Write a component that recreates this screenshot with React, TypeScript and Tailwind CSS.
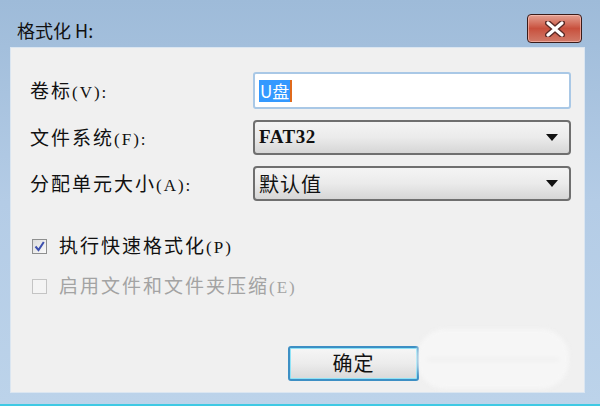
const Label: React.FC<{ zh: string; en: string; muted?: boolean }> = ({ zh, en, muted }) => (
  <span className={`flex items-baseline whitespace-nowrap ${muted ? "text-[#a3a3a3]" : "text-[#111]"}`}>
    <span className="font-['Noto_Sans_CJK_SC',sans-serif] text-[19px] tracking-[2px]">{zh}</span>
    <span className="font-['Liberation_Serif',serif] text-[17px] tracking-[2px]">{en}</span>
  </span>
);

const Arrow = () => (
  <svg width="12" height="7" viewBox="0 0 12 7" className="mr-[11px] shrink-0">
    <path d="M0 0h12L6 7z" fill="#111" />
  </svg>
);

const Select: React.FC<{ children: React.ReactNode }> = ({ children }) => (
  <div className="flex h-[35px] w-[318px] items-center justify-between rounded-[4px] border-2 border-[#6f6f6f] bg-gradient-to-b from-[#f4f4f4] via-[#ebebeb] to-[#d6d6d6] pl-[4px]">
    {children}
    <Arrow />
  </div>
);

const App: React.FC = () => {
  return (
    <div className="flex h-[406px] w-[600px] flex-col overflow-hidden border-b-2 border-[#3fc9e4] bg-gradient-to-b from-[#9ebbd9] via-[#b4cce6] to-[#bcd3ea]">
      {/* title bar */}
      <div className="flex h-[47px] shrink-0 items-start justify-between pl-[17px] pr-[18px]">
        <span className="mt-[19px] font-['Noto_Sans_CJK_SC',sans-serif] text-[18px] leading-[22px] text-[#111]">
          格式化 H:
        </span>
        <button className="mt-[14px] flex h-[29px] w-[55px] items-center justify-center rounded-[4px] border border-[#3a1c1a] bg-gradient-to-b from-[#e3a092] via-[#c8503d] to-[#d07a69] shadow-[inset_0_0_0_1px_rgba(255,200,190,0.6)]">
          <svg width="20" height="16" viewBox="0 0 20 16">
            <path d="M3 2l14 12M17 2L3 14" stroke="#5a2a26" strokeWidth="6" strokeLinecap="round" />
            <path d="M3 2l14 12M17 2L3 14" stroke="#fff" strokeWidth="3.2" strokeLinecap="round" />
          </svg>
        </button>
      </div>

      {/* client area */}
      <div className="ml-[10px] h-[346px] w-[575px] shrink-0 border border-[#dbe6f1] bg-[#f0f0f0] pt-[24px]">
        <div className="flex flex-col gap-[11px]">
          <div className="flex items-center">
            <div className="w-[242px] pl-[19px]">
              <Label zh="卷标" en="(V):" />
            </div>
            <div className="flex h-[37px] w-[318px] items-center rounded-[3px] border-2 border-[#a9c8e6] bg-white pl-[4px]">
              <span className="bg-[#3399ff] px-[1px] font-['Noto_Sans_CJK_SC',sans-serif] text-[17px] leading-[22px] text-white">
                U盘
              </span>
              <span className="h-[22px] w-[2px] bg-[#e06a1c]" />
            </div>
          </div>
          <div className="flex items-center">
            <div className="w-[242px] pl-[19px]">
              <Label zh="文件系统" en="(F):" />
            </div>
            <Select>
              <span className="font-['Liberation_Serif',serif] text-[19px] font-bold tracking-[0.5px] text-[#111]">FAT32</span>
            </Select>
          </div>
          <div className="flex items-center">
            <div className="w-[242px] pl-[19px]">
              <Label zh="分配单元大小" en="(A):" />
            </div>
            <Select>
              <span className="font-['Noto_Sans_CJK_SC',sans-serif] text-[20px] leading-[24px] tracking-[1px] text-[#111]">
                默认值
              </span>
            </Select>
          </div>
        </div>

        <div className="mt-[33px] flex flex-col gap-[16px] pl-[21px]">
          <label className="flex h-[24px] items-center gap-[12px]">
            <span className="flex h-[15px] w-[15px] shrink-0 items-center justify-center border border-[#8e8f8f] bg-gradient-to-br from-[#dcdcdc] to-[#fafafa]">
              <svg width="11" height="11" viewBox="0 0 11 11">
                <path d="M1.5 5.5l3 3.5L9.8 1" stroke="#3c4fae" strokeWidth="2" fill="none" />
              </svg>
            </span>
            <Label zh="执行快速格式化" en="(P)" />
          </label>
          <label className="flex h-[24px] items-center gap-[12px]">
            <span className="h-[15px] w-[15px] shrink-0 border border-[#c4c4c4] bg-[#f4f4f4]" />
            <Label zh="启用文件和文件夹压缩" en="(E)" muted />
          </label>
        </div>

        <div className="mt-[39px] flex items-center pl-[277px]">
          <button className="flex h-[35px] w-[131px] items-center justify-center rounded-[3px] border-2 border-[#3d8fc4] bg-gradient-to-b from-[#f6f6f6] via-[#ececec] to-[#d9d9d9] shadow-[inset_0_0_0_1px_#8fe3f7]">
            <span className="font-['Noto_Sans_CJK_SC',sans-serif] text-[20px] tracking-[1px] text-[#111]">确定</span>
          </button>
          <div className="-ml-[2px] -mt-[8px] flex h-[60px] w-[152px] items-center rounded-[28px] bg-[#f6f6f6] px-[10px] blur-[2px]">
            <div className="h-px w-full bg-[#e2e2e2]" />
          </div>
        </div>
      </div>
    </div>
  );
};

export default App;
